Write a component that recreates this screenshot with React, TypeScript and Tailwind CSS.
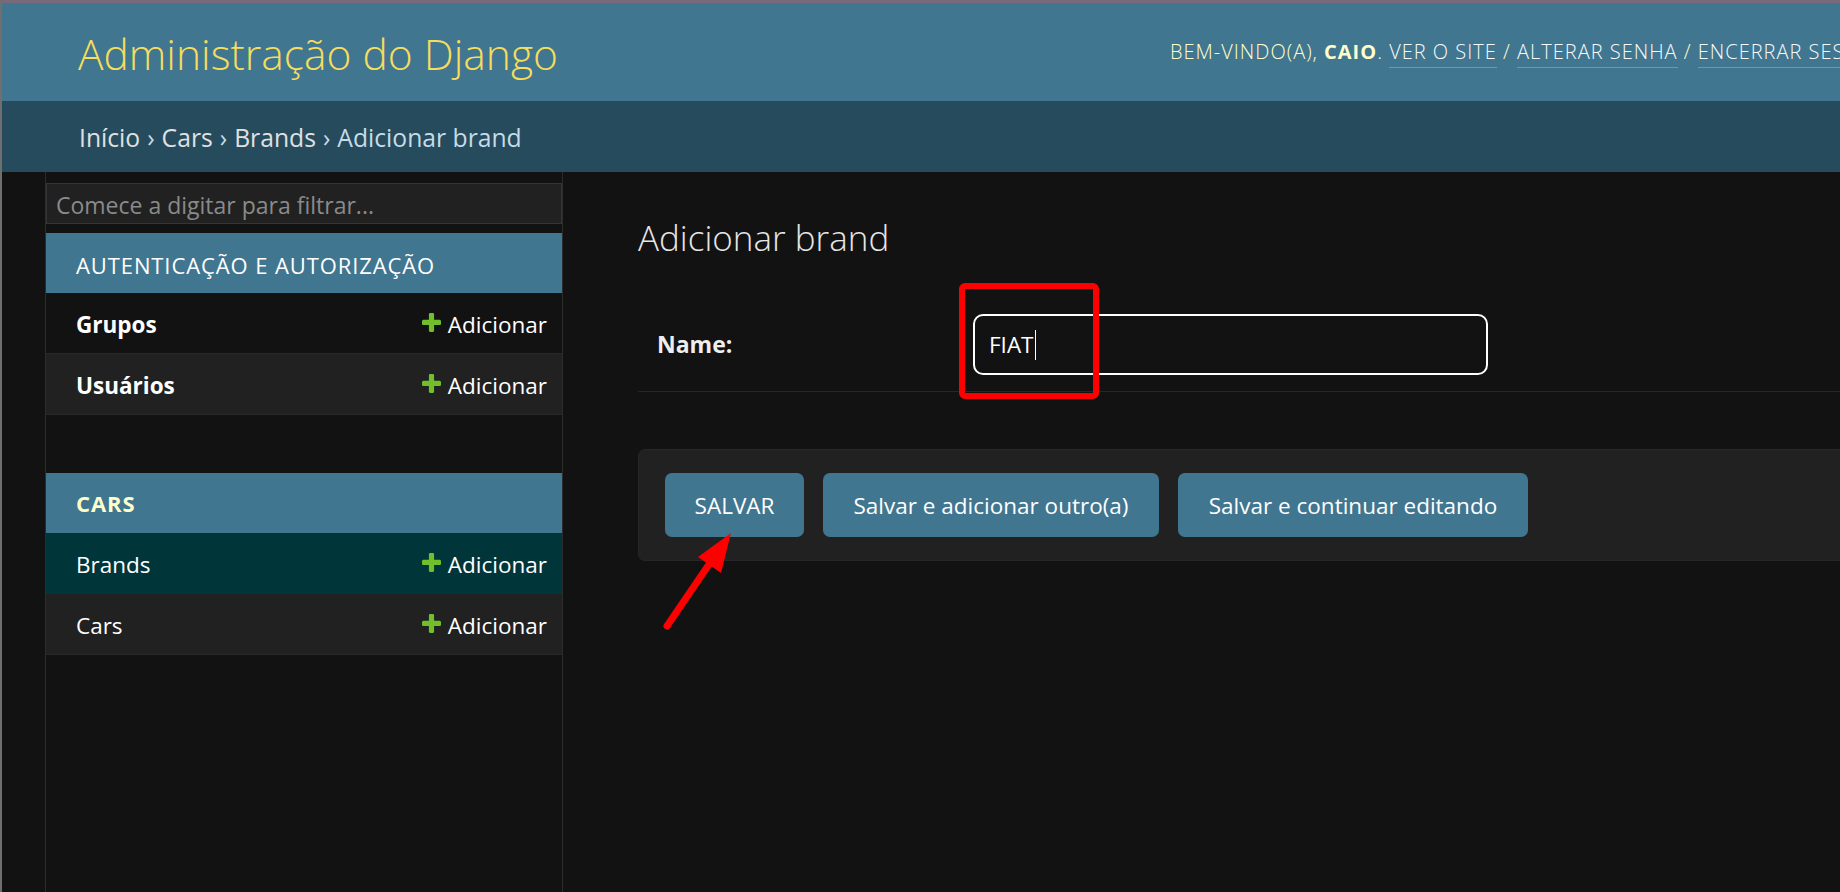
import React from "react";

const PlusIcon = () => (
  <svg width="19" height="19" viewBox="192 192 1408 1408" className="shrink-0">
    <path
      fill="#70bf2b"
      d="M1600 796v192q0 40-28 68t-68 28h-416v416q0 40-28 68t-68 28h-192q-40 0-68-28t-28-68v-416h-416q-40 0-68-28t-28-68v-192q0-40 28-68t68-28h416v-416q0-40 28-68t68-28h192q40 0 68 28t28 68v416h416q40 0 68 28t28 68z"
    />
  </svg>
);

interface ModelRowProps {
  name: string;
  bold?: boolean;
  bg: string;
}

function ModelRow({ name, bold, bg }: ModelRowProps) {
  return (
    <div className={`flex h-[61px] items-center justify-between border-b border-[#272727] pl-[30px] pr-[15px] pt-[4px] ${bg}`}>
      <span className={`text-[22.5px] text-white ${bold ? "font-bold" : "font-normal"}`}>{name}</span>
      <span className="flex items-center gap-[7px] text-[22.5px] text-white">
        <span className="-mt-[6px]">
          <PlusIcon />
        </span>
        Adicionar
      </span>
    </div>
  );
}

export default function App() {
  return (
    <div className="relative h-[892px] w-[1840px] overflow-hidden bg-[#121212] font-['Open_Sans',sans-serif]">
      <div className="flex h-full flex-col border-l-2 border-t-[3px] border-l-[#6f6f6f] border-t-[#776b79]">
        {/* header */}
        <header className="flex h-[98px] shrink-0 items-center overflow-hidden bg-[#417690] pl-[76px]">
          <div className="w-[1092px] shrink-0 pt-[5px] text-[42.5px] font-light leading-none text-[#f5dd5d]">
            Administração do Django
          </div>
          <div className="shrink-0 whitespace-nowrap text-[20px] font-light uppercase tracking-[1px] text-[#ffffcc]">
            Bem-vindo(a), <strong className="font-bold">Caio</strong>.{" "}
            <a className="border-b border-white/25 pb-[2px] text-[#f7fbfb]">Ver o site</a> /{" "}
            <a className="border-b border-white/25 pb-[2px] text-[#f7fbfb]">Alterar senha</a> /{" "}
            <a className="border-b border-white/25 pb-[2px] text-[#f7fbfb]">Encerrar sessão</a>
          </div>
        </header>

        {/* breadcrumbs */}
        <nav className="flex h-[71px] shrink-0 items-center bg-[#264b5d] pl-[77px] pt-[2px] text-[24.7px] text-[#c4dce8]">
          <a className="text-[#e0e0e0]">Início</a>
          <span className="mx-[7px]">›</span>
          <a className="text-[#e0e0e0]">Cars</a>
          <span className="mx-[7px]">›</span>
          <a className="text-[#e0e0e0]">Brands</a>
          <span className="mx-[7px]">›</span>
          <span>Adicionar brand</span>
        </nav>

        <div className="flex min-h-0 flex-1">
          {/* sidebar toggle */}
          <div className="w-[44px] shrink-0 border-r border-[#2c2c2c]" />

          {/* sidebar */}
          <aside className="w-[517px] shrink-0 border-r border-[#2c2c2c]">
            <div className="mb-[9px] mt-[11px] flex h-[41px] items-center border border-[#353535] bg-[#212121] pl-[9px] pt-[3px] text-[23px] text-[#8a8a8a]">
              Comece a digitar para filtrar...
            </div>

            <div className="mb-[58px]">
              <div className="flex h-[60px] items-center bg-[#417690] pl-[30px] pt-[4px] text-[22px] uppercase tracking-[0.9px] text-white">
                Autenticação e Autorização
              </div>
              <ModelRow name="Grupos" bold bg="bg-[#121212]" />
              <ModelRow name="Usuários" bold bg="bg-[#212121]" />
            </div>

            <div>
              <div className="flex h-[60px] items-center bg-[#417690] pl-[30px] pt-[1px] text-[22px] font-bold uppercase tracking-[0.9px] text-[#ffffcc]">
                Cars
              </div>
              <ModelRow name="Brands" bg="bg-[#00363a]" />
              <ModelRow name="Cars" bg="bg-[#212121]" />
            </div>
          </aside>

          {/* content */}
          <main className="min-w-0 flex-1 overflow-hidden pl-[75px] pt-[48px]">
            <div className="w-[1300px]">
              <h1 className="text-[35px] font-light leading-none text-[#e6e6e6]">Adicionar brand</h1>

              <div className="mt-[40px] flex items-center border-b border-[#272727] pb-[16px] pt-[19px]">
                <div className="w-[335px] shrink-0 pl-[19px] text-[23px] font-bold text-[#eeeeee]">Name:</div>
                <div className="flex h-[61px] w-[515px] items-center rounded-[10px] border-2 border-white bg-[#121212] pl-[14px] text-[22.5px] text-white">
                  FIAT
                  <span className="ml-[1px] h-[30px] w-[1px] bg-white" />
                </div>
              </div>

              <div className="mt-[57px] flex h-[112px] items-center gap-[19px] rounded-[7px] border border-[#272727] bg-[#212121] pl-[26px]">
                <button className="h-[64px] w-[139px] rounded-[7px] bg-[#417690] pt-[2px] text-[22.5px] text-white">SALVAR</button>
                <button className="h-[64px] w-[336px] rounded-[7px] bg-[#417690] pt-[2px] text-[22.5px] text-white">
                  Salvar e adicionar outro(a)
                </button>
                <button className="h-[64px] w-[350px] rounded-[7px] bg-[#417690] pt-[2px] text-[22.5px] text-white">
                  Salvar e continuar editando
                </button>
              </div>
            </div>
          </main>
        </div>
      </div>

      {/* red annotations */}
      <svg className="pointer-events-none absolute left-0 top-0" width="1840" height="892">
        <rect x="962" y="286" width="134" height="110" rx="3" fill="none" stroke="#ff0000" strokeWidth="6" />
        <line x1="667" y1="626" x2="712" y2="560" stroke="#ff0000" strokeWidth="7" strokeLinecap="round" />
        <polygon points="731,533 698,557 721,573" fill="#ff0000" />
      </svg>
    </div>
  );
}
